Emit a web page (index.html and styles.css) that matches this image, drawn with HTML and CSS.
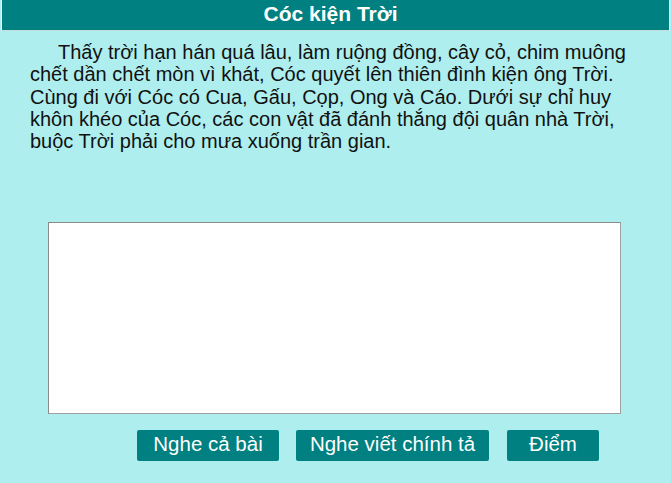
FILE: index.html
```html
<!DOCTYPE html>
<html lang="vi">
<head>
<meta charset="utf-8">
<title>Cóc kiện Trời</title>
<link rel="stylesheet" href="styles.css">
</head>
<body>
<h1 class="title">Cóc kiện Trời</h1>
<p class="story">Thấy trời hạn hán quá lâu, làm ruộng đồng, cây cỏ, chim muông chết dần chết mòn vì khát, Cóc quyết lên thiên đình kiện ông Trời. Cùng đi với Cóc có Cua, Gấu, Cọp, Ong và Cáo. Dưới sự chỉ huy khôn khéo của Cóc, các con vật đã đánh thắng đội quân nhà Trời, buộc Trời phải cho mưa xuống trần gian.</p>
<div class="answer-wrap">
  <textarea class="answer"></textarea>
</div>
<div class="actions">
  <button class="btn btn-all" type="button">Nghe cả bài</button>
  <button class="btn btn-dictation" type="button">Nghe viết chính tả</button>
  <button class="btn btn-score" type="button">Điểm</button>
</div>
</body>
</html>
```
FILE: styles.css
```css
html, body {
  margin: 0;
  padding: 0;
  background: #afeeee;
  font-family: "Liberation Sans", Arial, sans-serif;
}

.title {
  margin: 0 1px;
  padding-right: 10px;
  height: 31px;
  line-height: 27px;
  background: #008080;
  color: #fff;
  font-size: 21px;
  font-weight: bold;
  text-align: center;
  border-left: 1px solid #f4ffff;
  border-right: 1px solid #d8f4f4;
  border-bottom: 1px solid #c8dede;
  box-sizing: border-box;
}

.story {
  margin: 10px 0 0;
  padding: 0 30px;
  font-size: 20px;
  line-height: 22.3px;
  text-indent: 28px;
  color: #111;
}

.answer-wrap {
  padding: 70px 0 0 48px;
}

.answer {
  display: block;
  width: 573px;
  height: 192px;
  margin: 0;
  padding: 2px;
  box-sizing: border-box;
  border: 1px solid #8a8a8a;
  border-right-color: #a0a0a0;
  border-bottom-color: #a0a0a0;
  background: #fff;
  resize: none;
}

.actions {
  display: flex;
  gap: 17px;
  padding: 16px 0 0 137px;
}

.btn {
  height: 31px;
  margin: 0;
  padding: 0 0 4px;
  border: none;
  border-radius: 2px;
  background: #008080;
  color: #fff;
  font-family: "Liberation Sans", Arial, sans-serif;
  font-size: 20.5px;
  line-height: 27px;
}

.btn-all { width: 142px; }
.btn-dictation { width: 193px; }
.btn-score { width: 92px; margin-left: 1px; }
```
